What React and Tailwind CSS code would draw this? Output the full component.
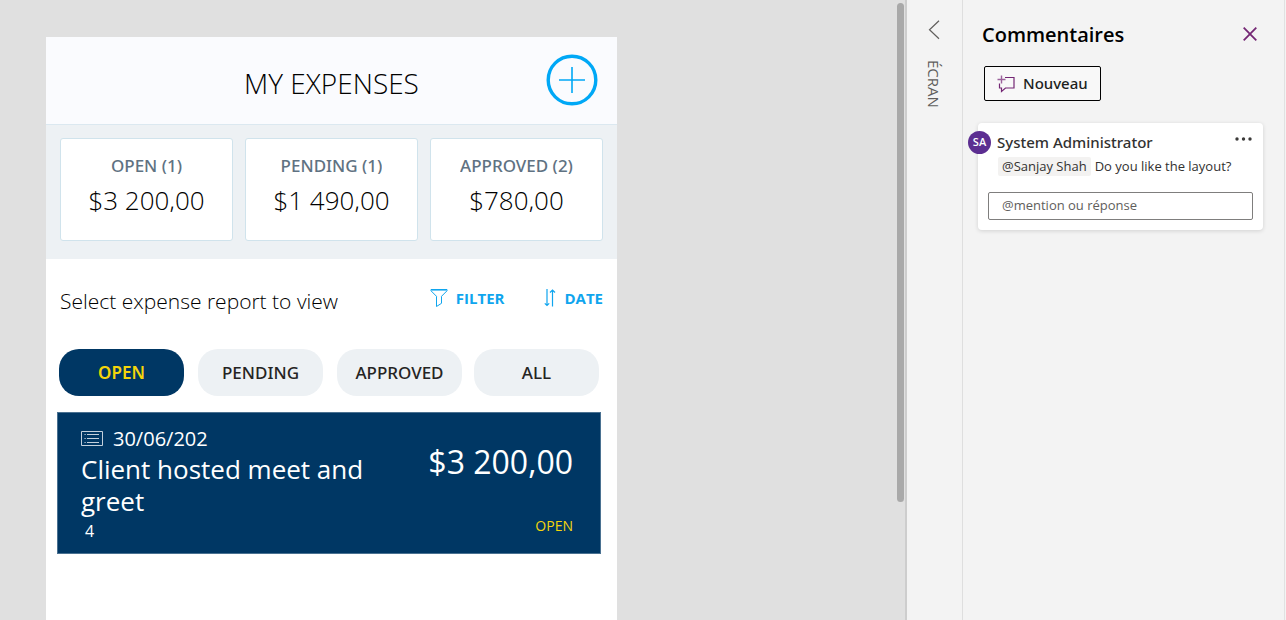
import { useState } from "react";

const STATS = [
  { label: "OPEN (1)", amount: "$3 200,00" },
  { label: "PENDING (1)", amount: "$1 490,00" },
  { label: "APPROVED (2)", amount: "$780,00" },
];

const REPORTS = [
  {
    id: 4,
    date: "30/06/202",
    title: "Client hosted meet and greet",
    amount: "$3 200,00",
    status: "OPEN",
  },
];

function PlusCircleIcon() {
  return (
    <svg width="52" height="52" viewBox="0 0 52 52" fill="none" stroke="#00a8f6">
      <circle cx="26" cy="26" r="23.8" strokeWidth="3.4" />
      <path d="M26 13v26M13 26h26" strokeWidth="1.6" />
    </svg>
  );
}

function FilterIcon() {
  return (
    <svg width="18" height="20" viewBox="0 0 18 20" fill="none" stroke="#0fa5ee" strokeWidth="1">
      <path d="M1 1.5h16v1.3l-5.500 5.500v7l-5 3.200V8.300L1 2.800V1.500z" />
      <path d="M1.500 2.500h15" strokeWidth=".6" />
    </svg>
  );
}

function SortIcon() {
  return (
    <svg width="12" height="20" viewBox="0 0 12 20" fill="none" stroke="#0fa5ee" strokeWidth="1.200">
      <path d="M3 1v16.500M.8 15.300L3 17.500l2.200-2.200" />
      <path d="M8.500 18.500V2M6 4.500L8.500 2 11 4.500" />
    </svg>
  );
}

function ListIcon() {
  return (
    <svg width="22" height="16" viewBox="0 0 22 16" fill="none" stroke="#c3d0dc">
      <path d="M.5.5h21v14H.5z" />
      <path d="M6 3.500h12M6 7.500h12M6 11.500h12M3.500 3.500h1.200M3.500 7.500h1.200M3.500 11.500h1.200" />
    </svg>
  );
}

function NewCommentIcon() {
  return (
    <svg width="18" height="18" viewBox="0 0 18 18" fill="none" stroke="#742774">
      <path d="M8 2.500h9v10.500H8.500L4.500 16.500V13H2.500V8.500" strokeWidth="1.200" />
      <path d="M4.500 .500v8M.500 4.500h8" stroke="#9b629b" strokeWidth="1.400" />
    </svg>
  );
}

function Chip({ label, active, onClick }) {
  return (
    <button
      onClick={onClick}
      className={`h-[47px] w-[125px] rounded-[20px] font-['Noto_Sans',sans-serif] text-[17px] ${
        active
          ? "bg-[#003764] font-semibold text-[#f5d60a]"
          : "bg-[#edf1f4] font-medium text-[#252423]"
      }`}
    >
      {label}
    </button>
  );
}

function ExpensesApp() {
  const [tab, setTab] = useState("OPEN");

  const chip = (name) => (
    <Chip key={name} label={name} active={tab === name} onClick={() => setTab(name)} />
  );

  return (
    <section className="w-full max-w-[571px] bg-white font-['Open_Sans',sans-serif] text-[#252423]">
      <header className="grid h-[88px] grid-cols-[1fr_auto_1fr] items-center border-b border-[#dbe8f0] bg-[#fafbfe] px-[19px]">
        <h1 className="col-start-2 pt-1 text-[28px] font-light text-black">MY EXPENSES</h1>
        <button aria-label="New expense" className="justify-self-end pb-0.5">
          <PlusCircleIcon />
        </button>
      </header>

      {/* Totals */}
      <div className="grid grid-cols-3 gap-3 bg-[#edf1f4] px-3.5 pt-[13px] pb-[18px]">
        {STATS.map((s) => (
          <div
            key={s.label}
            className="flex h-[103px] flex-col items-center rounded-[3px] border border-[#d0e3ec] bg-white pt-[15px]"
          >
            <div className="h-5 overflow-hidden font-['Noto_Sans',sans-serif] text-[17px] leading-6 font-medium text-[#5f7282]">
              {s.label}
            </div>
            <div className="mt-2 h-[30px] overflow-hidden text-[26px] leading-9 font-light text-black">
              {s.amount}
            </div>
          </div>
        ))}
      </div>

      <div className="flex items-start justify-between px-3.5 pt-6">
        <h2 className="text-[21px] leading-9 font-light text-black">
          Select expense report to view
        </h2>
        <div className="flex gap-10 pt-1 text-[15px] leading-[22px] font-bold text-[#0fa5ee]">
          <button className="flex items-center gap-2">
            <FilterIcon />
            FILTER
          </button>
          <button className="flex items-center gap-2">
            <SortIcon />
            DATE
          </button>
        </div>
      </div>

      <div className="flex justify-between pt-[30px] pr-[18px] pl-[13px]">
        <div className="flex gap-3.5">{["OPEN", "PENDING", "APPROVED"].map(chip)}</div>
        {chip("ALL")}
      </div>

      {/* Reports */}
      <ul className="pt-4 pr-4 pl-[11px]">
        {REPORTS.map((r) => (
          <li
            key={r.id}
            className="flex h-[142px] justify-between border border-[#4a7191] bg-[#003764] px-[23px] pt-3 text-white"
          >
            <div className="w-[300px]">
              <div className="flex items-center gap-2.5">
                <ListIcon />
                <span className="text-[20px] leading-7">{r.date}</span>
              </div>
              <div className="text-[26px] leading-8">{r.title}</div>
              <div className="px-1 text-base leading-7">{r.id}</div>
            </div>
            <div className="flex flex-col items-end justify-between pt-[17px] pr-1 pb-[17px]">
              <span className="text-[32px] leading-10">{r.amount}</span>
              <span className="text-sm text-[#f5d60a]">{r.status}</span>
            </div>
          </li>
        ))}
      </ul>
    </section>
  );
}

function CommentCard() {
  return (
    <article className="relative mt-[22px] mr-[21px] ml-[15px] rounded bg-white p-2.5 shadow-[0_1px_4px_rgba(0,0,0,0.14)]">
      <span className="absolute top-2 -left-2.5 flex size-[23px] items-center justify-center rounded-full bg-[#5c2e91] text-[11px] font-semibold text-white">
        SA
      </span>
      <div className="flex items-start justify-between pl-[9px]">
        <h3 className="font-['Noto_Sans',sans-serif] text-[15px] leading-[18px] font-medium text-[#323130]">
          System Administrator
        </h3>
        <button aria-label="More">
          <svg width="18" height="12" viewBox="0 0 18 12" fill="#3b3a39">
            <circle cx="2" cy="6" r="1.700" />
            <circle cx="8.500" cy="6" r="1.700" />
            <circle cx="15" cy="6" r="1.700" />
          </svg>
        </button>
      </div>
      <p className="mt-1.5 flex pl-2.5 text-[13px] leading-[19px] text-[#323130]">
        <span className="rounded-xs bg-[#f3f2f1] px-1">@Sanjay Shah</span>
        <span className="px-1">Do you like the layout?</span>
      </p>
      <input
        aria-label="@mention ou réponse"
        placeholder="@mention ou réponse"
        className="mt-4 block h-7 w-full rounded-xs border border-[#7f7e7d] bg-white px-[13px] pb-0.5 text-[13px] placeholder:text-[#605e5c]"
      />
    </article>
  );
}

export default function App() {
  return (
    <div className="flex h-screen overflow-hidden bg-[#f3f3f3]">
      <main className="flex min-w-0 flex-1 justify-between border-r-2 border-[#cdcdcd] bg-[#e0e0e0]">
        <div className="flex flex-1 pt-[37px] pl-[46px]">
          <ExpensesApp />
        </div>
        <div className="mt-[3px] mr-px h-[499px] w-[7px] rounded-full bg-[#a9a9a9]" />
      </main>

      <nav className="flex w-14 flex-col items-center border-r border-[#dedede] pt-5 pr-0.5 font-['Open_Sans',sans-serif]">
        <button aria-label="Back">
          <svg width="12" height="20" viewBox="0 0 12 20" fill="none" stroke="#605e5c" strokeWidth="1.200">
            <path d="M11 .8L1.500 9.800l9.500 9" />
          </svg>
        </button>
        <span className="mt-5 text-[15px] text-[#605e5c] [writing-mode:vertical-rl]">
          ÉCRAN
        </span>
      </nav>

      <aside className="mr-px w-[322px] border-r border-[#e1e1e1] font-['Open_Sans',sans-serif]">
        <div className="flex items-center justify-between pt-5 pr-[27px] pl-[19px]">
          <h2 className="text-[20px] leading-[30px] font-semibold text-black">Commentaires</h2>
          <button aria-label="Fermer" className="pb-0.5">
            <svg width="14" height="14" viewBox="0 0 14 14" fill="none" stroke="#742774" strokeWidth="1.800">
              <path d="M.7.7l12.600 12.600M13.300.7L.7 13.300" />
            </svg>
          </button>
        </div>
        <button className="mt-4 ml-[21px] flex h-[35px] items-center gap-2 rounded-xs border border-black bg-[#f8f8f8] px-3 font-['Noto_Sans',sans-serif] text-[15px] font-medium text-[#201f1e]">
          <NewCommentIcon />
          Nouveau
        </button>
        <CommentCard />
      </aside>
    </div>
  );
}
